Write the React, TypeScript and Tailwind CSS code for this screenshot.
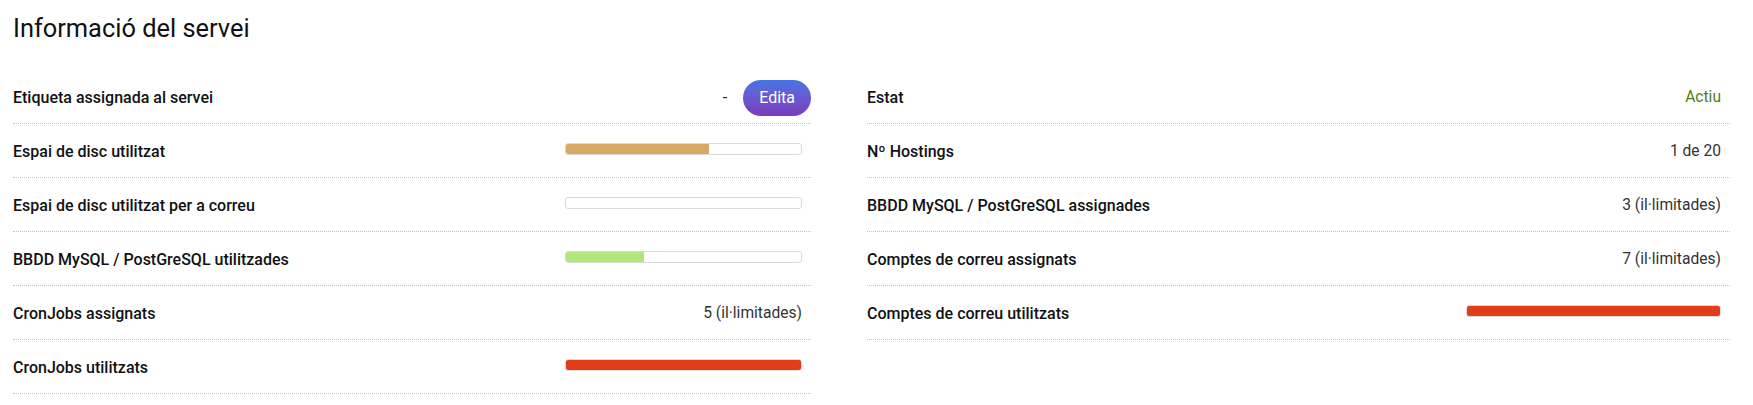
import React from 'react';

type Row = {
  label: string;
  value?: React.ReactNode;
  bar?: { pct: number; color: string };
  edit?: boolean;
  green?: boolean;
};

const leftRows: Row[] = [
  { label: 'Etiqueta assignada al servei', value: '-', edit: true },
  { label: 'Espai de disc utilitzat', bar: { pct: 61, color: '#d8a865' } },
  { label: 'Espai de disc utilitzat per a correu', bar: { pct: 0, color: '#d8a865' } },
  { label: 'BBDD MySQL / PostGreSQL utilitzades', bar: { pct: 33, color: '#b1e67c' } },
  { label: 'CronJobs assignats', value: '5 (il·limitades)' },
  { label: 'CronJobs utilitzats', bar: { pct: 100, color: '#e03e19' } },
];

const rightRows: Row[] = [
  { label: 'Estat', value: 'Actiu', green: true },
  { label: 'Nº Hostings', value: '1 de 20' },
  { label: 'BBDD MySQL / PostGreSQL assignades', value: '3 (il·limitades)' },
  { label: 'Comptes de correu assignats', value: '7 (il·limitades)' },
  { label: 'Comptes de correu utilitzats', bar: { pct: 100, color: '#e03e19' } },
];

function Bar({ pct, color, wide }: { pct: number; color: string; wide?: boolean }) {
  return (
    <div
      className={`${wide ? 'w-[255px]' : 'w-[237px]'} h-[12px] mr-[9px] mb-[6px] border border-[#dadada] rounded-[3px] bg-white overflow-hidden`}
    >
      <div className="h-full" style={{ width: `${pct}%`, background: color }} />
    </div>
  );
}

function InfoRow({ row, wide }: { row: Row; wide?: boolean }) {
  return (
    <div className="h-[54px] flex items-center justify-between border-b border-dotted border-[#c4c4c4] pt-[3px]">
      <span className="text-[16px] font-medium text-[#111]">{row.label}</span>
      {row.bar ? (
        <Bar pct={row.bar.pct} color={row.bar.color} wide={wide} />
      ) : row.edit ? (
        <div className="flex items-center">
          <span className="text-[16px] text-[#222] mr-[16px]">{row.value}</span>
          <button className="h-[36px] px-[16px] rounded-full bg-linear-to-b from-[#4574e4] to-[#7a3abd] text-white text-[16px] leading-none">
            Edita
          </button>
        </div>
      ) : (
        <span className={`text-[15.6px] mr-[9px] ${row.green ? 'text-[#4f7d17]' : 'text-[#333]'}`}>{row.value}</span>
      )}
    </div>
  );
}

export default function App() {
  return (
    <div className="w-[1753px] h-[405px] bg-white pl-[13px] pr-[23px] pt-[13px] font-['Roboto',sans-serif]">
      <h1 className="text-[25.4px] leading-[30px] text-[#111] font-normal mb-[27px]">Informació del servei</h1>
      <div className="grid grid-cols-[798px_1fr] gap-x-[56px] items-start">
        <div>
          {leftRows.map((r) => (
            <InfoRow key={r.label} row={r} />
          ))}
        </div>
        <div>
          {rightRows.map((r) => (
            <InfoRow key={r.label} row={r} wide />
          ))}
        </div>
      </div>
    </div>
  );
}
